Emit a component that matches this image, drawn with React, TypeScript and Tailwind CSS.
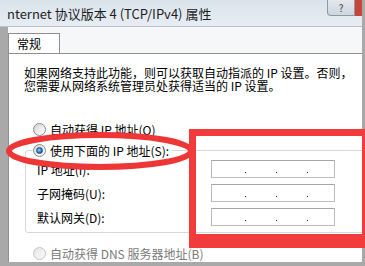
import React from "react";

const FONT = "font-['Noto_Sans_CJK_SC','Noto_Sans',sans-serif]";

function Radio(props: { checked?: boolean; disabled?: boolean }) {
  if (props.disabled) {
    return (
      <div className="h-[13px] w-[13px] shrink-0 rounded-full border border-[#c4c4c4] bg-gradient-to-br from-[#e6e6e6] to-[#fafafa]" />
    );
  }
  return (
    <div className="flex h-[13px] w-[13px] shrink-0 items-center justify-center rounded-full border border-[#8b8b8b] bg-gradient-to-br from-[#d6d6d6] to-white">
      {props.checked && (
        <div className="h-[7px] w-[7px] rounded-full border border-[#1d4f80] bg-[radial-gradient(circle_at_40%_40%,#9fd3ff,#2a6fb4_60%,#1b4a7c)]" />
      )}
    </div>
  );
}

function IpBox() {
  return (
    <div className="flex h-[18px] w-[124px] items-start gap-[30px] border border-[#b9bcc2] border-t-[#a4a7ad] bg-white pl-[33px] pt-[11px]">
      <span className="h-[1px] w-[1px] bg-[#111]" />
      <span className="h-[1px] w-[1px] bg-[#111]" />
      <span className="h-[1px] w-[1px] bg-[#111]" />
    </div>
  );
}

const rows = ["IP 地址(I):", "子网掩码(U):", "默认网关(D):"];

export default function App() {
  return (
    <div
      className={`relative flex h-[266px] w-[365px] flex-col overflow-hidden bg-[#a9a9a9] text-black ${FONT}`}
    >
      {/* title bar */}
      <div className="flex h-[27px] w-[362px] shrink-0 justify-between border-b border-[#b8c3ce] bg-gradient-to-b from-[#dae3ec] to-[#e7edf3]">
        <div className="flex items-center pl-[7px] text-[13px] leading-[13px] text-[#1e1e1e]">
          nternet 协议版本 4 (TCP/IPv4) 属性
        </div>
        <div className="flex items-start">
          <div className="flex h-[16px] w-[28px] items-center justify-center rounded-bl-[4px] border border-t-0 border-[#8d99a6] bg-gradient-to-b from-[#e3e8ee] to-[#cdd5de] text-[10px] leading-[12px] text-[#3c3c3c]">
            ?
          </div>
          <div className="h-[16px] w-[7px] bg-[#c8443a]" />
        </div>
      </div>

      {/* body */}
      <div className="ml-[8px] flex w-[354px] flex-1 flex-col bg-[#f5f7f9]">
        <div className="flex h-[26px] shrink-0 items-end">
          <div className="-mb-px flex h-[21px] w-[52px] items-center border border-b-0 border-[#8e9096] bg-white pl-[8px] text-[12px] leading-[12px]">
            常规
          </div>
        </div>
        <div className="flex flex-1 flex-col overflow-hidden border-l border-t border-[#8e9096] bg-white pt-[12px] text-[12px] leading-[13px]">
          <div className="pl-[15px] leading-[13px]">
            <div>如果网络支持此功能，则可以获取自动指派的 IP 设置。否则，</div>
            <div>您需要从网络系统管理员处获得适当的 IP 设置。</div>
          </div>

          <div className="mt-[30px] flex h-[14px] items-center gap-[4px] pl-[24px]">
            <Radio />
            <span>自动获得 IP 地址(O)</span>
          </div>

          <fieldset className="mr-[-6px] ml-[16px] mt-[7px] rounded-[3px] border border-[#d5d9de] pb-[6px]">
            <legend className="ml-[7px] flex h-[14px] items-center gap-[4px] pr-[3px]">
              <Radio checked />
              <span>使用下面的 IP 地址(S):</span>
            </legend>
            <div className="grid grid-cols-[185px_124px] gap-y-[6px] pt-[3px]">
              {rows.map((label) => (
                <React.Fragment key={label}>
                  <div className="flex items-center pl-[11px]">{label}</div>
                  <IpBox />
                </React.Fragment>
              ))}
            </div>
          </fieldset>

          <div className="mt-[13px] flex h-[14px] items-center gap-[4px] pl-[24px] text-[#7a7a7a]">
            <Radio disabled />
            <span>自动获得 DNS 服务器地址(B)</span>
          </div>
        </div>
      </div>
      <div className="h-[4px] shrink-0" />

      {/* annotation: red ellipse */}
      <svg
        className="pointer-events-none absolute left-0 top-[128px]"
        width="200"
        height="48"
        viewBox="0 0 200 48"
      >
        <ellipse
          cx="100"
          cy="23"
          rx="91"
          ry="16"
          fill="none"
          stroke="#ee3636"
          strokeWidth="6"
        />
      </svg>

      {/* annotation: red box */}
      <div className="pointer-events-none absolute left-[189px] top-[129px] h-[119px] w-[180px] border-[7px] border-b-[14px] border-[#f23b3d]" />
    </div>
  );
}
